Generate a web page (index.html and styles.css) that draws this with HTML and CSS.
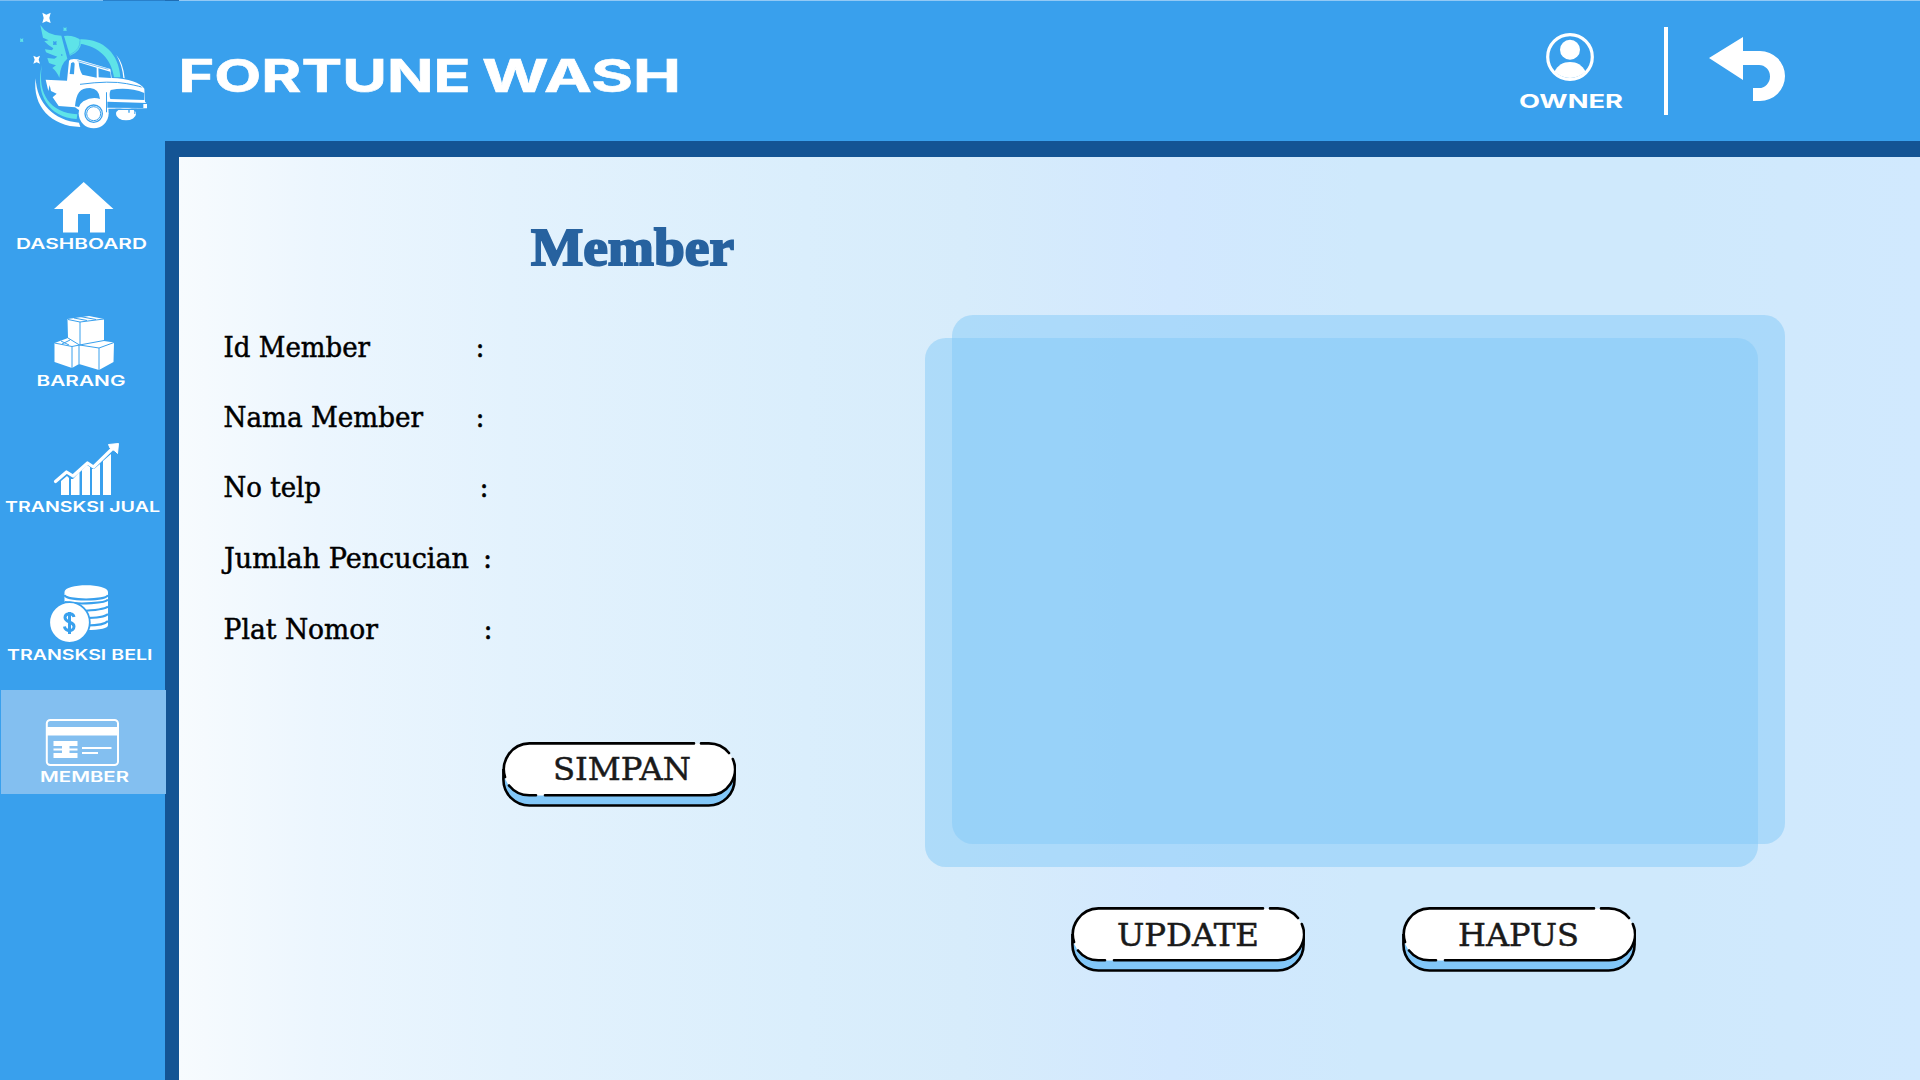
FILE: index.html
```html
<!DOCTYPE html>
<html lang="id">
<head>
<meta charset="utf-8">
<title>Fortune Wash - Member</title>
<link rel="stylesheet" href="styles.css">
</head>
<body>
<svg width="0" height="0" class="defs" aria-hidden="true">
  <symbol id="pill" viewBox="0 0 234 65">
    <path d="M1.4 27V37.5A26 26 0 0 0 27.4 63.5H206.6A26 26 0 0 0 232.6 37.5V27" fill="#82c7f8" stroke="#000" stroke-width="2.6"/>
    <rect x="1.4" y="1.4" width="231.2" height="52" rx="26" fill="#fff"/>
    <path d="M3 35A26 26 0 0 1 27.4 1.4H192M199 1.4H206.6A26 26 0 0 1 227 11M230.8 17A26 26 0 0 1 206.6 53.3H43M34 53.3H27.4A26 26 0 0 1 7 43.5" fill="none" stroke="#000" stroke-width="2.6" stroke-linecap="round"/>
  </symbol>
</svg>

<header class="header">
  <svg class="logo" viewBox="0 0 510 423">
    <g fill="#5ee3e8">
      <path d="M121 75Q140 106 184 107L202 176Q181 192 178 233Q170 214 157 204L168 196Q157 193 147 189L142 174L163 176L172 170Q150 163 138 157L135 148L156 151L160 145Q145 137 133 124L146 121L129 113Z"/>
      <path d="M192 108Q224 105 244 122Q244 153 210 167Z"/>
      <path d="M241 118C308 116 357 160 361 232H342C334 177 299 139 238 131Z"/>
      <path d="M126 195C111 282 151 338 232 343L230 357C147 353 103 282 126 195Z"/>
      <path d="M190 82l5 2 5-2-1 5 1 6-5-1-5 1 1-6zM60 115l5 2 5-2-1 5 1 6-5-1-5 1 1-6z"/>
    </g>
    <path d="M159 123l5 2 6-2-1 6 1 6-5-1-6 1 1-6zM183 162l6 3-5 3z" fill="#39a0ed"/>
    <path d="M240 121Q242 149 210 164" fill="none" stroke="#39a0ed" stroke-width="1.500"/>
    <g fill="#fff">
      <path d="M127 38L139 44L152 38L148 54L152 69L139 64L127 69L131 54ZM100 167L110 172L120 167L116 179L120 191L110 187L100 191L104 179Z"/>
      <path d="M107 235C110 310 162 362 237 368L241 381C154 380 96 319 107 235Z"/>
      <path d="M349 165Q370 190 374 235L370 234Q367 196 349 165Z"/>
      <path d="M137 239L201 242L207 183Q211 175 232 178L331 207L335 234C385 235 421 248 433 266L435 305L441 311V325L325 326L324 338L241 333L225 322L176 318L158 292L170 281L153 273L149 255L145 273Z"/>
      <ellipse cx="378" cy="342" rx="30" ry="19"/>
      <circle cx="281" cy="340" r="45"/>
    </g>
    <g fill="#39a0ed">
      <path d="M225 319C229 280 239 264 270 264Q298 266 300 297Q277 288 250 304Q240 311 237 321Z"/>
      <path d="M236 187L290 203V233L247 224Q238 211 236 187ZM295 205L331 215L333 234L296 232ZM213 190Q221 183 224 191L222 223L209 222Z"/>
      <path d="M332 270Q385 260 433 279V300L331 297Q326 282 332 270Z"/>
      <path d="M322 305L441 309V312L322 308ZM322 308L430 311V324L322 323ZM318 277h3v60h-3zM346 326h64v4h-64zM385 330h4v8h-4zM403 328h3v14h-3z"/>
    </g>
    <g fill="none" stroke="#39a0ed">
      <circle cx="281" cy="341" r="26" stroke-width="4"/>
      <circle cx="281" cy="341" r="21" stroke-width="3"/>
      <path d="M232 182L325 208" stroke-width="2"/>
      <path d="M240 253Q330 241 380 251T425 262" stroke-width="3"/>
    </g>
  </svg>
  <svg class="brand" viewBox="0 0 500 60"><text x="-2.500" y="45" textLength="292" lengthAdjust="spacingAndGlyphs">FORTUNE</text><text x="301" y="45" textLength="199" lengthAdjust="spacingAndGlyphs">WASH</text></svg>
  <div class="owner">
    <svg class="avatar" width="48" height="48" viewBox="0 0 48 48">
      <circle cx="24" cy="24" r="22.3" fill="none" stroke="#fff" stroke-width="3.2"/>
      <circle cx="24" cy="16.8" r="10" fill="#fff"/>
      <path d="M8.500 38.500C12 32 17 29 24 29S36 32 39.500 38.500A22 22 0 0 1 8.500 38.500Z" fill="#fff"/>
    </svg>
    <svg class="owner-label" viewBox="0 0 104 24"><text x="0" y="18" textLength="104" lengthAdjust="spacingAndGlyphs">OWNER</text></svg>
  </div>
  <div class="divider"></div>
  <svg class="back" viewBox="0 0 76 64"><path d="M0 21L34 0V14H51A25 25 0 0 1 51 64H44V51H50A11 11.500 0 0 0 50 28H34V43Z" fill="#fff"/></svg>
</header>

<div class="body">
  <nav class="nav">
    <a class="item">
      <svg class="icon" viewBox="0 170 165 65"><path d="M83.700 182L113.500 209H105V232.500H90V214H78V232.500H63V209H54Z" fill="#fff"/></svg>
      <svg class="label" viewBox="0 0 165 20"><text x="16" y="15" textLength="131" lengthAdjust="spacingAndGlyphs">DASHBOARD</text></svg>
    </a>
    <a class="item">
      <svg class="icon" viewBox="0 307 165 65">
        <path d="M67.500 319L89 316L104 319V341L114 342.500L113.500 362L99 370L79 364L72 368L54.500 362V343L68 338Z" fill="#fff"/>
        <path d="M68 319.500L80 322L104 319M80 322V345M74 318L87 320.500M80 316.500L96 319.500M68 338L79.500 345L104 340.500M54.500 343L72 346.500L79.500 345L99 348L114 342.500M72 346.500V368M79 345V364M99 348V370M61 341L69 345M62 344L70 340" fill="none" stroke="#39a0ed" stroke-width="1"/>
      </svg>
      <svg class="label" viewBox="0 0 165 20"><text x="36.500" y="15" textLength="89" lengthAdjust="spacingAndGlyphs">BARANG</text></svg>
    </a>
    <a class="item">
      <svg class="icon" viewBox="0 433 165 65">
        <path d="M61 481L67 476L69 478V495H61ZM71 479L73 479L79.500 472V495H71ZM82 470L87 465L90 467V495H82ZM92 469H94L100 464V495H92ZM103 461L111 454V495H103Z" fill="#fff"/>
        <path d="M55.500 481.500L66.500 472L73 476L87.500 463L93.500 467L113 448" fill="none" stroke="#fff" stroke-width="3.200" stroke-linejoin="round" stroke-linecap="round"/>
        <path d="M108.500 444.500L118.500 443.500L117.500 453.500L115 451L110 448Z" fill="#fff" stroke="#fff"/>
      </svg>
      <svg class="label" viewBox="0 0 165 20"><text x="5" y="15" textLength="155" lengthAdjust="spacingAndGlyphs">TRANSKSI JUAL</text></svg>
    </a>
    <a class="item">
      <svg class="icon" viewBox="0 581 165 65">
        <path d="M64.500 592C64.500 583 108 583 108 592V625Q108 630 86 630L64.500 612Z" fill="#fff"/>
        <path d="M64.500 595C66 601 106 601 108 595M64.500 602C80 605 106 603 108 599.500M80 611Q104 610 108 606.500M84 618Q104 618 108 614M87 625.500Q104 625.500 108 621" fill="none" stroke="#39a0ed" stroke-width="2.200"/>
        <circle cx="69.500" cy="622.500" r="20.300" fill="#fff" stroke="#39a0ed" stroke-width="1.800"/>
        <path d="M74 617C73 612 65 613 65 617.500C65 623 74 621 74 626.500C74 632 65 632 64.500 626.500M69.500 612V634" fill="none" stroke="#39a0ed" stroke-width="3"/>
      </svg>
      <svg class="label" viewBox="0 0 165 20"><text x="7" y="15" textLength="145.500" lengthAdjust="spacingAndGlyphs">TRANSKSI BELI</text></svg>
    </a>
    <a class="item active">
      <svg class="icon" viewBox="0 703 165 65">
        <rect x="46.800" y="720" width="71.200" height="45" rx="3.500" fill="none" stroke="#fff" stroke-width="2"/>
        <path d="M47 727H118V735.500H47ZM53.500 741H77.500V746H69.500V748.500H77.500V750.500H69.500V753H77.500V758H53.500V753H62V750.500H53.500V748.500H62V746H53.500ZM82 747H111.500V749H82ZM82 752H98V754H82Z" fill="#fff"/>
      </svg>
      <svg class="label" viewBox="0 0 165 20"><text x="40" y="15" textLength="89" lengthAdjust="spacingAndGlyphs">MEMBER</text></svg>
    </a>
  </nav>

  <main class="main">
    <section class="form">
      <svg class="title" viewBox="0 0 206 60"><text x="1" y="49.500" textLength="203" lengthAdjust="spacingAndGlyphs">Member</text></svg>
      <div class="rows">
        <svg class="row" viewBox="0 0 290 70.200"><text x="-.5" y="44.500" textLength="146.500" lengthAdjust="spacingAndGlyphs">Id Member</text><text x="251.500" y="44.500">:</text></svg>
        <svg class="row" viewBox="0 0 290 70.200"><text x="-.5" y="44.500" textLength="199.500" lengthAdjust="spacingAndGlyphs">Nama Member</text><text x="251.500" y="44.500">:</text></svg>
        <svg class="row" viewBox="0 0 290 70.200"><text x="-.5" y="44.500" textLength="97.500" lengthAdjust="spacingAndGlyphs">No telp</text><text x="255.500" y="44.500">:</text></svg>
        <svg class="row" viewBox="0 0 290 70.200"><text x="0" y="44.300" textLength="245" lengthAdjust="spacingAndGlyphs">Jumlah Pencucian</text><text x="259" y="44.300">:</text></svg>
        <svg class="row" viewBox="0 0 290 70.200"><text x="-.5" y="44.800" textLength="154.500" lengthAdjust="spacingAndGlyphs">Plat Nomor</text><text x="259.500" y="44.800">:</text></svg>
      </div>
      <svg class="button save" viewBox="0 0 234 65"><use href="#pill"/><text x="51" y="37.500" textLength="138" lengthAdjust="spacingAndGlyphs">SIMPAN</text></svg>
    </section>
    <section class="data">
      <div class="panels"><div class="panel upper"></div><div class="panel lower"></div></div>
      <div class="actions">
        <svg class="button" viewBox="0 0 234 65"><use href="#pill"/><text x="46" y="38.500" textLength="142" lengthAdjust="spacingAndGlyphs">UPDATE</text></svg>
        <svg class="button" viewBox="0 0 234 65"><use href="#pill"/><text x="56" y="38.500" textLength="121" lengthAdjust="spacingAndGlyphs">HAPUS</text></svg>
      </div>
    </section>
  </main>
</div>
</body>
</html>
```
FILE: styles.css
```css
* { box-sizing: border-box; }
body {
  margin: 0;
  width: 1920px;
  height: 1080px;
  overflow: hidden;
  display: flex;
  flex-direction: column;
  background: #39a0ed;
}
svg { display: block; flex: none; overflow: visible; }
.defs { display: none; }

.header {
  height: 141px;
  flex: none;
  display: flex;
  align-items: flex-start;
  background: linear-gradient(90deg, #7bbdf2 103px, #2980ca 103px 165px, #1f6db3 165px 179px, #93c9f5 179px) top / 100% 1px no-repeat;
  font-family: Inter, sans-serif;
  font-weight: 700;
}
.header text, .nav text { fill: #fff; }
.logo { width: 170px; height: 141px; }
.brand {
  width: 500px;
  height: 60px;
  margin: 47px 0 0 11px;
  font-size: 45px;
  stroke: #fff;
  stroke-width: .6px;
}
.owner {
  display: flex;
  flex-direction: column;
  align-items: center;
  width: 104px;
  margin: 33px 0 0 838px;
}
.avatar { margin-right: 2px; }
.owner-label { width: 104px; height: 24px; margin-top: 9px; font-size: 19px; }
.divider { width: 4px; height: 88px; margin: 27px 0 0 41px; background: #fff; }
.back { width: 76px; height: 64px; margin: 37px 0 0 41px; }

.body { flex: 1; display: flex; min-height: 0; }
.nav {
  width: 165px;
  flex: none;
  display: flex;
  flex-direction: column;
  padding-top: 29px;
  font: 600 14.700px Inter, sans-serif;
}
.item { display: block; height: 85px; margin-bottom: 52px; }
.item:nth-child(2) { margin-bottom: 41px; }
.item:nth-child(3) { margin-bottom: 63px; }
.item:nth-child(4) { margin-bottom: 24px; }
.icon { width: 165px; height: 65px; }
.label { width: 165px; height: 20px; margin-top: -1px; }
.item.active {
  position: relative;
  width: 165px;
  height: 104px;
  margin: 0 0 0 1px;
  padding-top: 13px;
  background: #83bff0;
}
.active .icon, .active .label { margin-left: -1px; }

.main {
  flex: 1;
  display: flex;
  padding-left: 45px;
  border: solid #145494;
  border-width: 16px 0 0 14px;
  background: linear-gradient(90deg, #f7fbfe 0, #ecf6fe 8%, #e3f2fd 19%, #daeefc 36%, #d7ecfb 45%, #d2e8fe 57%, #cfe9fc 68%, #cfe9fc 85%, #d1e9fe 100%);
}
.form { width: 701px; flex: none; padding-top: 58px; }
.title {
  width: 206px;
  height: 60px;
  margin-left: 306px;
  font: 700 53px "Liberation Serif", serif;
  fill: #27629f;
  stroke: #27629f;
  stroke-width: 2px;
}
.rows { display: flex; flex-direction: column; margin-top: 38px; }
.row {
  width: 290px;
  height: 70.200px;
  font: 27px "DejaVu Serif", serif;
  stroke: #000;
  stroke-width: .5px;
}
.button { width: 234px; height: 65px; font: 32.500px "DejaVu Serif", serif; fill: #1a1a1a; }
.button text { stroke: #1a1a1a; stroke-width: .5px; }
.save { margin: 78px 0 0 278px; }

.data { padding-top: 158px; }
.panels { display: grid; width: 860px; height: 552px; }
.panel {
  grid-area: 1 / 1;
  width: 833px;
  height: 529px;
  border-radius: 21px;
  background: rgba(132, 201, 247, .5);
}
.upper { justify-self: end; align-self: start; }
.lower { justify-self: start; align-self: end; }
.actions { display: flex; gap: 97px; margin: 40px 0 0 146px; }
```
